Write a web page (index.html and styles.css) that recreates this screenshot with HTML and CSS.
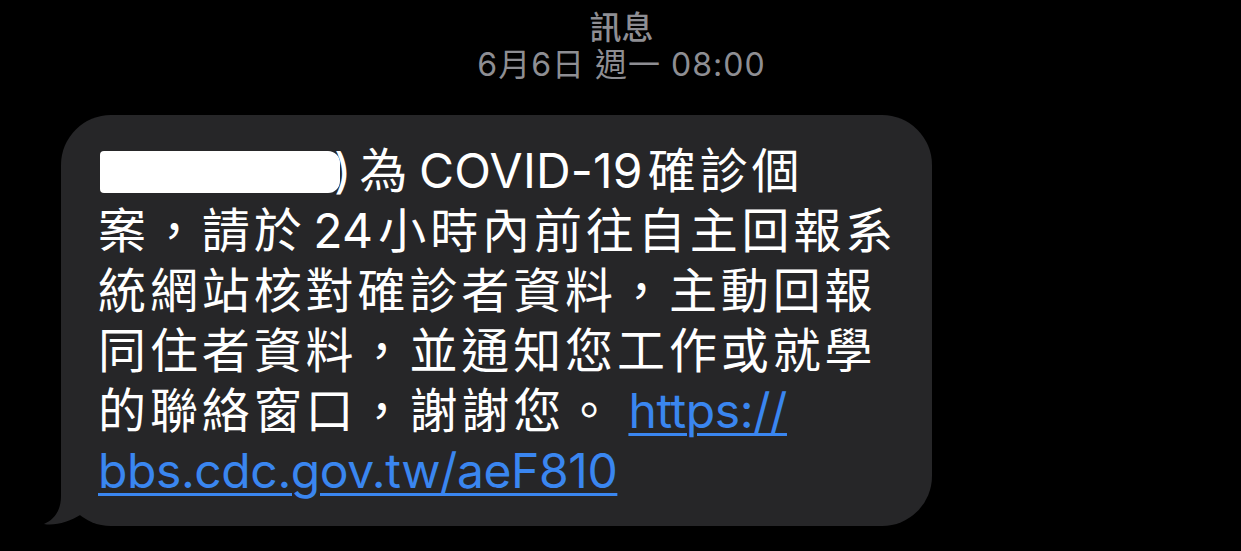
FILE: index.html
```html
<!DOCTYPE html>
<html lang="zh-Hant">
<head>
<meta charset="utf-8">
<title>訊息</title>
<link rel="stylesheet" href="styles.css">
</head>
<body>
<header class="head">
  <div class="title">訊息</div>
  <div class="date">6月6日 週一 08:00</div>
</header>
<main class="thread">
  <div class="bubble">
    <p class="text"><span class="redact"></span><span class="lat">) </span>為<span class="lat num"> COVID-19</span>確診個<br>案，請於<span class="lat num"> 24</span>小時內前往自主回報系<br>統網站核對確診者資料，主動回報<br>同住者資料，並通知您工作或就學<br>的聯絡窗口，謝謝您。 <a class="link" href="#">https://<br>bbs.cdc.gov.tw/aeF810</a></p>
    <svg class="tail" width="50" height="66" viewBox="0 0 50 66"><path d="M20 0 L20 36 C20 52 12 60 3 64 C14 66 28 62 41 54 L41 0 Z" fill="#262628"/></svg>
  </div>
</main>
</body>
</html>
```

FILE: styles.css
```css
html, body {
  margin: 0;
  padding: 0;
  background: #000;
}
body {
  width: 1241px;
  height: 551px;
  overflow: hidden;
  font-family: "Inter", "Noto Sans CJK TC", sans-serif;
}
.head {
  display: flex;
  flex-direction: column;
  align-items: center;
  color: #8e8e93;
  padding-top: 4px;
}
.title {
  font-family: "Noto Sans CJK TC", sans-serif;
  font-size: 32px;
  line-height: 42px;
  font-weight: 500;
  padding-left: 2px;
}
.date {
  font-family: "Inter", "Noto Sans CJK TC", sans-serif;
  font-size: 32px;
  line-height: 38px;
  letter-spacing: 1px;
  padding-left: 2px;
}
.thread {
  padding-top: 31px;
  padding-left: 61px;
}
.bubble {
  position: relative;
  width: 871px;
  box-sizing: border-box;
  background: #262628;
  border-radius: 50px;
  padding: 26px 20px 25px 37px;
}
.text {
  margin: 0;
  color: #fff;
  font-size: 48px;
  line-height: 60px;
  letter-spacing: 3.9px;
  word-spacing: -6px;
  white-space: nowrap;
}
.lat {
  letter-spacing: 0.2px;
}
.num {
  margin-right: 5px;
}
.redact {
  display: inline-block;
  width: 240px;
  height: 42px;
  background: #fff;
  border-radius: 4px 12px 12px 4px;
  vertical-align: -5px;
  margin-left: 2px;
  margin-right: -6px;
}
.link {
  color: #3a86f0;
  text-decoration: underline;
  text-decoration-thickness: 2.5px;
  text-underline-offset: 5px;
  letter-spacing: -0.4px;
  word-spacing: 0;
}
.tail {
  position: absolute;
  left: -20px;
  bottom: 0;
  display: block;
}
```
